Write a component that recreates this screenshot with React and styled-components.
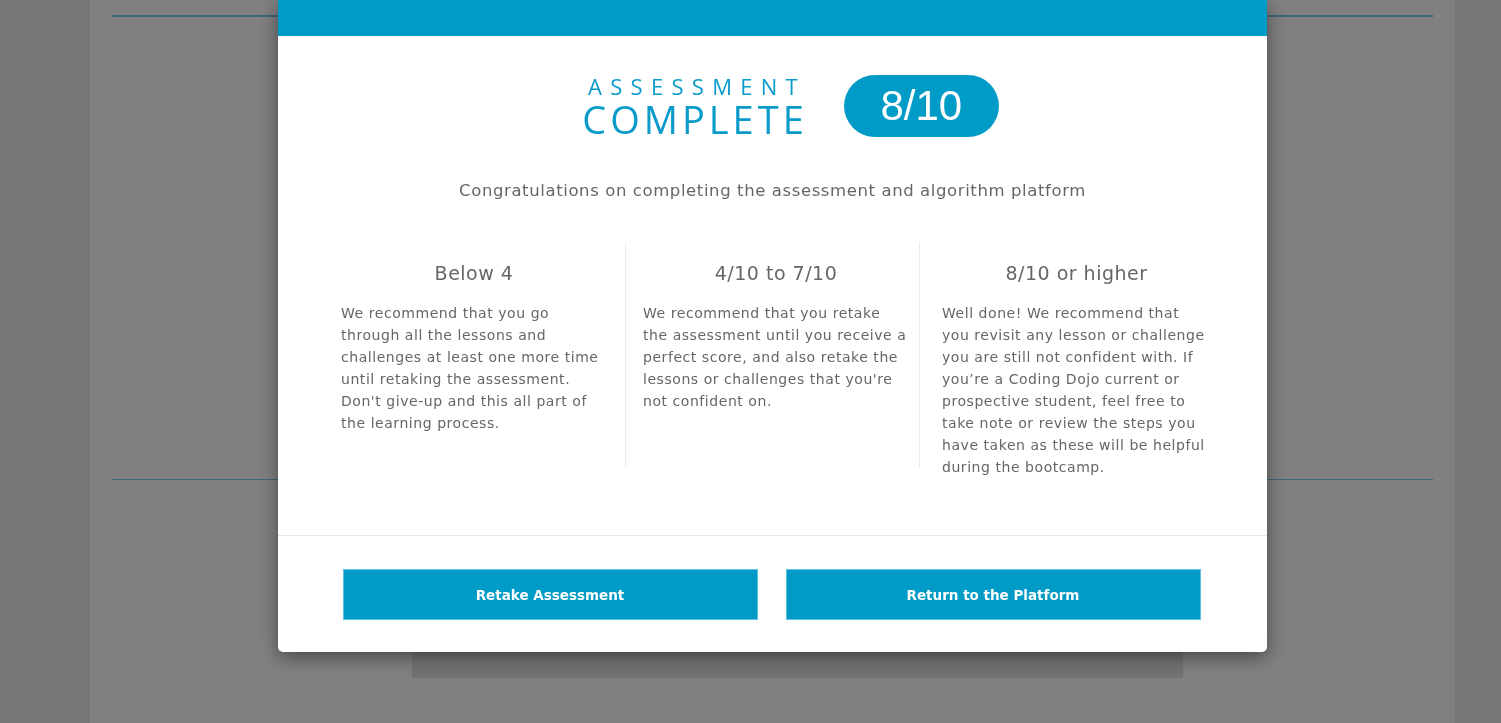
import styled, { createGlobalStyle } from 'styled-components';

const GlobalStyle = createGlobalStyle`
  html, body {
    margin: 0;
    padding: 0;
    height: 100%;
    overflow: hidden;
    background: #767676;
    font-family: "DejaVu Sans", "Open Sans", sans-serif;
  }
`;

const Page = styled.div`
  margin: 0 46px 0 90px;
  height: 723px;
  background: #808080;
  padding: 15px 22px 0;
  box-sizing: border-box;
`;

const Rule = styled.div`
  height: ${(p) => p.$thick || 2}px;
  background: #3d6878;
`;

const Panel = styled.div`
  margin: 0 250px 0 300px;
  height: 178px;
  background: #737373;
`;

const Spacer = styled.div`
  height: ${(p) => p.$h}px;
`;

const Modal = styled.div`
  position: fixed;
  top: 0;
  left: 278px;
  width: 989px;
  background: #fff;
  border-radius: 0 0 5px 5px;
  box-shadow: 0 5px 18px rgba(0, 0, 0, 0.45);
  overflow: hidden;
`;

const Header = styled.div`
  height: 36px;
  background: #009bc7;
`;

const Body = styled.div`
  padding: 37px 0 0;
  height: 499px;
  box-sizing: border-box;
`;

const TitleRow = styled.div`
  display: flex;
  justify-content: center;
  align-items: center;
  gap: 40px;
  margin-left: 36px;
`;

const TitleBlock = styled.div`
  display: flex;
  flex-direction: column;
  align-items: center;
  color: #0a9bca;
  font-family: "Open Sans", "Liberation Sans", sans-serif;
`;

const Small = styled.div`
  font-size: 22px;
  line-height: 26px;
  letter-spacing: 8.3px;
  margin-right: -8px;
  font-weight: 500;
`;

const Big = styled.div`
  font-size: 38px;
  line-height: 40px;
  font-weight: 500;
  letter-spacing: 4px;
  margin-right: -4px;
`;

const Badge = styled.div`
  width: 155px;
  height: 62px;
  border-radius: 31px;
  background: #009bc7;
  color: #fff;
  display: flex;
  align-items: center;
  justify-content: center;
  font-family: "Liberation Sans", Arial, sans-serif;
  font-size: 42px;
`;

const Subtitle = styled.p`
  margin: 42px 0 0;
  text-align: center;
  color: #666;
  font-size: 16.5px;
  letter-spacing: 0.6px;
`;

const Columns = styled.div`
  display: grid;
  grid-template-columns: repeat(3, 295px);
  justify-content: center;
  align-items: start;
  margin-top: 42px;
`;

const Column = styled.div`
  padding: 0 ${(p) => p.$pr}px 0 ${(p) => p.$pl}px;
  height: ${(p) => (p.$divided ? '226px' : 'auto')};
  border-left: ${(p) => (p.$divided ? '1px solid #ebebeb' : 'none')};
  border-right: ${(p) => (p.$divided ? '1px solid #ebebeb' : 'none')};
`;

const ColTitle = styled.h3`
  margin: 18px 0 16px;
  text-align: center;
  font-size: 19px;
  letter-spacing: 0.5px;
  font-weight: 400;
  color: #666;
  line-height: 26px;
`;

const ColText = styled.p`
  margin: 0;
  font-size: 14px;
  letter-spacing: 0.55px;
  line-height: 22px;
  color: #666;
`;

const Footer = styled.div`
  border-top: 1px solid #e6e6e6;
  padding: 33px 0 32px;
  display: flex;
  justify-content: center;
  gap: 28px;
  margin-left: -2px;
`;

const Button = styled.button`
  width: 415px;
  height: 51px;
  background: #009bc7;
  border: 1px solid #5ec3e2;
  color: #fff;
  font-family: "DejaVu Sans", "Open Sans", sans-serif;
  font-weight: 700;
  font-size: 13.5px;
  cursor: pointer;
`;

const cols = [
  {
    title: 'Below 4',
    text: "We recommend that you go through all the lessons and challenges at least one more time until retaking the assessment. Don't give-up and this all part of the learning process.",
    pl: 11,
    pr: 18,
  },
  {
    title: '4/10 to 7/10',
    text: "We recommend that you retake the assessment until you receive a perfect score, and also retake the lessons or challenges that you're not confident on.",
    pl: 17,
    pr: 10,
    divided: true,
  },
  {
    title: '8/10 or higher',
    text: 'Well done! We recommend that you revisit any lesson or challenge you are still not confident with. If you’re a Coding Dojo current or prospective student, feel free to take note or review the steps you have taken as these will be helpful during the bootcamp.',
    pl: 22,
    pr: 4,
  },
];

const App = () => {
  return (
    <>
      <GlobalStyle />
      <Page>
        <Rule />
        <Spacer $h={462} />
        <Rule $thick={1} />
        <Spacer $h={20} />
        <Panel />
      </Page>
      <Modal>
        <Header />
        <Body>
          <TitleRow>
            <TitleBlock>
              <Small>ASSESSMENT</Small>
              <Big>COMPLETE</Big>
            </TitleBlock>
            <Badge>8/10</Badge>
          </TitleRow>
          <Subtitle>Congratulations on completing the assessment and algorithm platform</Subtitle>
          <Columns>
            {cols.map((c) => (
              <Column key={c.title} $pl={c.pl} $pr={c.pr} $divided={c.divided}>
                <ColTitle>{c.title}</ColTitle>
                <ColText>{c.text}</ColText>
              </Column>
            ))}
          </Columns>
        </Body>
        <Footer>
          <Button>Retake Assessment</Button>
          <Button>Return to the Platform</Button>
        </Footer>
      </Modal>
    </>
  );
};

export default App;
